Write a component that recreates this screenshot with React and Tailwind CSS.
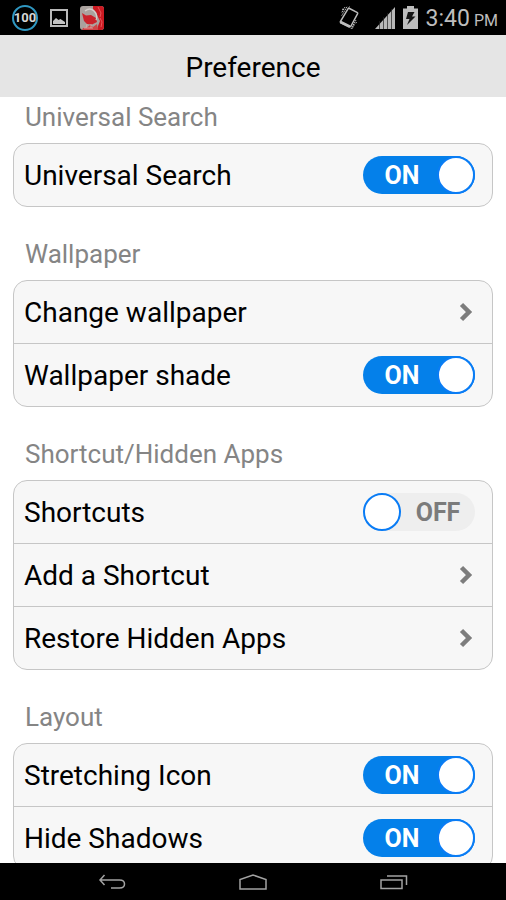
import React, { useState } from "react";

const SECTIONS = [
  {
    title: "Universal Search",
    items: [{ label: "Universal Search", type: "switch", on: true }],
  },
  {
    title: "Wallpaper",
    items: [
      { label: "Change wallpaper", type: "link" },
      { label: "Wallpaper shade", type: "switch", on: true },
    ],
  },
  {
    title: "Shortcut/Hidden Apps",
    items: [
      { label: "Shortcuts", type: "switch", on: false },
      { label: "Add a Shortcut", type: "link" },
      { label: "Restore Hidden Apps", type: "link" },
    ],
  },
  {
    title: "Layout",
    items: [
      { label: "Stretching Icon", type: "switch", on: true },
      { label: "Hide Shadows", type: "switch", on: true },
    ],
  },
];

function StatusBar() {
  return (
    <div className="flex h-[35px] shrink-0 items-center justify-between bg-black pr-2 pl-3 text-[#bdbdbd]">
      <div className="flex items-center gap-3">
        {/* Battery percentage */}
        <div className="flex h-[26px] w-[26px] items-center justify-center rounded-full border-2 border-[#2f97c1] text-[13px] font-bold text-[#d6d6d6]">
          100
        </div>
        {/* Screenshot saved */}
        <svg width="18" height="18" viewBox="0 0 18 18" fill="none" aria-hidden="true">
          <rect x="1" y="1" width="16" height="16" stroke="#b9b9b9" strokeWidth="2" />
          <path d="M3 15v-3l3-3 2.5 2 2-1 4.5 3v2z" fill="#c4c4c4" />
        </svg>
        {/* App notification */}
        <svg width="24" height="24" viewBox="0 0 24 24" aria-hidden="true">
          <rect width="24" height="24" rx="3" fill="#aaa29e" />
          <path d="M13 0h8q3 0 3 3v18q0 3-3 3h-4l1-4 2-5-2-4-2-5-3-3z" fill="#cb1a22" />
          <path d="M18 1l3 6-1 4M20 12l2 4-1 5" fill="none" stroke="#e8565a" strokeWidth="1" />
          <path d="M2 7l4 2.500 5-.5 5 3 1 4-5 2.500-5-.5-3-3z" fill="#cb232b" />
          <path d="M2 24l1-2 4-.5 3-2.500 3 2 4-3 1 6z" fill="#cf4446" />
          <path d="M5 5q5-4 9 0t2 9" fill="none" stroke="#d6cfcc" strokeWidth="1.200" />
          <path d="M7 18l-1 4M11 18v4M4 22h9" fill="none" stroke="#ddb0ac" strokeWidth="0.800" />
        </svg>
      </div>

      <div className="flex items-center">
        {/* Vibrate */}
        <svg className="mr-4" width="20" height="24" viewBox="0 0 20 24" fill="none" stroke="#bdbdbd" aria-hidden="true">
          <path d="M10.500 2.500l7.500 3.800q1 .5.500 1.500L12 20q-.5 1-1.500.500L2 16.800q-1-.5-.500-1.500L9 3q.500-1 1.500-.500z" strokeWidth="1.500" />
          <path d="M1.500 16l9.500 4.800" strokeWidth="2.800" />
          <path d="M8 .800L2.500 10M6 1L2.500 7M10.500.500L9 3M4 2.500L3 4.500M17 14l-5 9M15.500 18.500L13 23M17.500 16l-1 2" strokeWidth="1" strokeDasharray="1.500 0.700" />
        </svg>
        {/* Signal */}
        <svg className="mr-2" width="20" height="22" viewBox="0 0 20 22" aria-hidden="true">
          <path d="M0 22L20 0v22z" fill="#b8b8b8" />
          <path d="M4.500 14v8M8.500 10v12M12.500 6v16M16.500 2v20" stroke="#222" strokeWidth="0.700" />
        </svg>
        {/* Battery charging */}
        <svg className="mr-2" width="15" height="23" viewBox="0 0 15 23" aria-hidden="true">
          <path d="M4 0h7v2.500h4V23H0V2.500h4z" fill="#bdbdbd" />
          <path d="M5 6h6.500L9 10.500h3.500L4 19l2.500-6H3z" fill="#151515" />
        </svg>
        <div className="flex items-baseline gap-1 pt-1 leading-6">
          <span className="text-[23px]">3:40</span>
          <span className="text-[16px]">PM</span>
        </div>
      </div>
    </div>
  );
}

function Switch({ id, defaultOn }) {
  const [on, setOn] = useState(defaultOn);

  return (
    <label className="relative block cursor-pointer">
      <input
        id={id}
        type="checkbox"
        role="switch"
        className="sr-only"
        checked={on}
        onChange={(e) => setOn(e.target.checked)}
      />
      {on ? (
        <span className="flex h-[38px] w-[112px] items-center rounded-full bg-[#0480ea] text-[25px] font-bold text-white">
          <span className="flex-1 pt-0.5 pl-1 text-center">ON</span>
          <span className="h-[38px] w-[38px] rounded-full border-2 border-[#0a7cf5] bg-white" />
        </span>
      ) : (
        <span className="flex h-[38px] w-[112px] items-center rounded-full bg-[#eeeeee] text-[25px] font-bold text-[#7b7b7b]">
          <span className="h-[38px] w-[38px] rounded-full border-2 border-[#0a7cf5] bg-white" />
          <span className="flex-1 pt-0.5 text-center">OFF</span>
        </span>
      )}
    </label>
  );
}

function Chevron() {
  return (
    <svg className="mr-0.5" width="14" height="20" viewBox="0 0 14 20" fill="none" aria-hidden="true">
      <path d="M2.500 2.500L10 10l-7.500 7.500" stroke="#7d7d7d" strokeWidth="4.500" />
    </svg>
  );
}

function Row({ item }) {
  const id = item.label.toLowerCase().replace(/\s+/g, "-") + "-pref";
  const row = "flex h-[62px] w-full items-center justify-between pr-[17px] pl-[10px] text-left text-[28px] text-black";

  if (item.type === "link") {
    return (
      <button type="button" className={row}>
        <span className="pt-0.5">{item.label}</span>
        <Chevron />
      </button>
    );
  }

  return (
    <div className={row}>
      <label htmlFor={id} className="pt-0.5">{item.label}</label>
      <Switch id={id} defaultOn={item.on} />
    </div>
  );
}

function NavBar() {
  return (
    <nav className="flex h-[37px] shrink-0 items-center justify-around bg-black px-[42px]">
      <button type="button" aria-label="Back">
        <svg width="28" height="16" viewBox="0 0 28 16" fill="none" stroke="#a3a3a3" strokeWidth="1.500">
          <path d="M6.500 1L2 6l4.500 5M2 6h19.500q5 0 5 4t-5 4H13" />
        </svg>
      </button>
      <button type="button" aria-label="Home">
        <svg width="28" height="16" viewBox="0 0 28 16" fill="none" stroke="#a3a3a3" strokeWidth="1.500">
          <path d="M1 15V5.500L14 1l13 4.500V15z" />
        </svg>
      </button>
      <button type="button" aria-label="Recent apps">
        <svg width="28" height="16" viewBox="0 0 28 16" fill="none" stroke="#a3a3a3" strokeWidth="1.500">
          <path d="M1 6h21v8.500H1zM7 2h19.500v9" />
        </svg>
      </button>
    </nav>
  );
}

export default function App() {
  return (
    <div className="flex h-screen flex-col overflow-hidden bg-white font-['Roboto',sans-serif]">
      <StatusBar />
      <header className="flex h-[62px] shrink-0 items-center justify-center bg-[#e5e5e5]">
        <h1 className="pt-1 text-[28px] text-black">Preference</h1>
      </header>

      <main className="flex min-h-0 flex-1 flex-col gap-[31px] overflow-hidden px-[13px] pt-1">
        {SECTIONS.map((section) => (
          <section key={section.title} className="shrink-0">
            <h2 className="mb-[10px] pl-3 text-[26px] leading-8 text-[#858585]">{section.title}</h2>
            <ul className="divide-y divide-[#c6c6c6] overflow-hidden rounded-[14px] border border-[#c6c6c6] bg-[#f7f7f7]">
              {section.items.map((item) => (
                <li key={item.label}>
                  <Row item={item} />
                </li>
              ))}
            </ul>
          </section>
        ))}
      </main>

      <NavBar />
    </div>
  );
}
